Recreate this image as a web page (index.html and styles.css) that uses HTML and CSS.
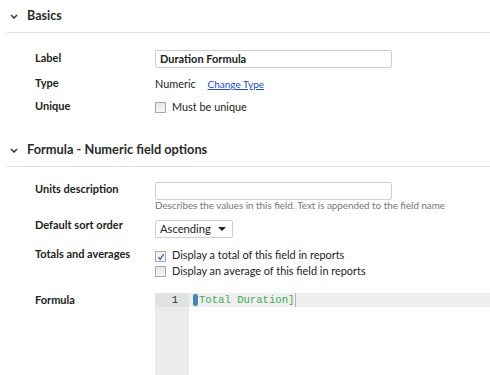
FILE: index.html
```html
<!DOCTYPE html>
<html lang="en">

<head>
    <meta charset="UTF-8">
    <title>Field settings</title>
    <link rel="stylesheet" href="styles.css">
</head>

<body>
    <div class="section">
        <div class="section-head">
            <svg class="chevron" width="8" height="5" viewBox="0 0 8 5"><path d="M1 1 L4 4 L7 1" fill="none" stroke="#333" stroke-width="1.5"/></svg>
            <span>Basics</span>
        </div>
        <div class="fields basics">
            <div class="row row-label">
                <div class="label">Label</div>
                <div class="value"><div class="input bold">Duration Formula</div></div>
            </div>
            <div class="row row-type">
                <div class="label">Type</div>
                <div class="value text">Numeric <a href="#" class="link">Change Type</a></div>
            </div>
            <div class="row row-unique">
                <div class="label">Unique</div>
                <div class="value text"><span class="check"></span>Must be unique</div>
            </div>
        </div>
    </div>

    <div class="section">
        <div class="section-head">
            <svg class="chevron" width="8" height="5" viewBox="0 0 8 5"><path d="M1 1 L4 4 L7 1" fill="none" stroke="#333" stroke-width="1.5"/></svg>
            <span>Formula - Numeric field options</span>
        </div>
        <div class="fields options">
            <div class="row row-units">
                <div class="label">Units description</div>
                <div class="value">
                    <div class="input"></div>
                    <div class="hint">Describes the values in this field. Text is appended to the field name</div>
                </div>
            </div>
            <div class="row row-sort">
                <div class="label">Default sort order</div>
                <div class="value"><div class="select">Ascending <span class="caret"></span></div></div>
            </div>
            <div class="row row-totals">
                <div class="label">Totals and averages</div>
                <div class="value text">
                    <div class="opt"><span class="check checked"><svg width="8" height="8" viewBox="0 0 8 8"><path d="M1.5 4.2 L3.2 6.3 L6.6 1.2" fill="none" stroke="#3b63b8" stroke-width="1.4"/></svg></span>Display a total of this field in reports</div>
                    <div class="opt"><span class="check"></span>Display an average of this field in reports</div>
                </div>
            </div>
            <div class="row row-formula">
                <div class="label">Formula</div>
                <div class="editor">
                    <div class="gutter"><div class="num">1</div></div>
                    <div class="code">
                        <div class="line"><span class="bracket">[</span>Total Duration]<span class="cursor"></span></div>
                    </div>
                </div>
            </div>
        </div>
    </div>
</body>

</html>
```
FILE: styles.css
```css
* {
    padding: 0;
    margin: 0;
    box-sizing: border-box;
}

body {
    width: 490px;
    height: 375px;
    overflow: hidden;
    font-family: Lato, "Open Sans", sans-serif;
    color: #222;
    background: #fff;
}

.section {
    margin-left: 7px;
}

.section-head {
    display: flex;
    align-items: center;
    gap: 9px;
    height: 33px;
    padding-left: 3px;
    border-bottom: 1px solid #dcdcdc;
    font-size: 12.5px;
    font-weight: bold;
    color: #2a2a2a;
}

.section-head span {
    margin-top: -1px;
}

.section + .section .section-head {
    font-size: 12.8px;
    height: 34px;
}

.chevron {
    margin-top: 1px;
}

.fields {
    padding-left: 28px;
}

.basics {
    padding-top: 17px;
    padding-bottom: 18px;
}

.options {
    padding-top: 15px;
}

.row {
    display: grid;
    grid-template-columns: 120px 1fr;
    align-items: start;
}

.label {
    font-size: 11px;
    font-weight: bold;
    line-height: 14px;
    color: #222;
}

.text {
    font-size: 10.9px;
    line-height: 16px;
    color: #222;
}

.input {
    width: 237px;
    height: 18px;
    border: 1px solid #cfcfcf;
    border-radius: 2px;
    padding: 0 4px;
    font-size: 11px;
    line-height: 16px;
}

.bold {
    font-weight: bold;
}

.row-label {
    margin-bottom: 8px;
}

.row-label .label {
    margin-top: 1px;
}

.row-type {
    margin-bottom: 7px;
}

.link {
    color: #1a4fc8;
    font-size: 10px;
    margin-left: 9px;
}

.check {
    display: inline-flex;
    align-items: center;
    justify-content: center;
    width: 11px;
    height: 11px;
    border: 1px solid #a9a9a9;
    background: linear-gradient(#e6e6e6, #f7f7f7);
    vertical-align: -2px;
    margin-right: 6px;
}

.check.checked {
    background: #f4f4f4;
}

.row-units {
    margin-bottom: 6px;
}

.hint {
    font-size: 9.8px;
    color: #777;
    line-height: 12px;
    margin-top: -1px;
}

.row-sort {
    margin-bottom: 9px;
}

.row-sort .label {
    margin-top: 1px;
}

.select {
    display: inline-flex;
    align-items: center;
    justify-content: space-between;
    width: 78px;
    height: 18px;
    border: 1px solid #cfcfcf;
    border-radius: 2px;
    padding: 0 6px 0 4px;
    font-size: 11.2px;
}

.caret {
    width: 0;
    height: 0;
    border-left: 4px solid transparent;
    border-right: 4px solid transparent;
    border-top: 4px solid #222;
}

.row-totals {
    margin-bottom: 14px;
}

.opt {
    height: 16px;
}

.editor {
    display: flex;
    height: 90px;
}

.gutter {
    width: 34px;
    background: #ebebeb;
    flex-shrink: 0;
}

.num {
    height: 14px;
    line-height: 14px;
    text-align: right;
    padding-right: 11px;
    font-family: "Liberation Mono", monospace;
    font-size: 10.6px;
    color: #333;
    background: #e2e2e2;
}

.code {
    flex: 1;
}

.line {
    height: 14px;
    line-height: 14px;
    padding-left: 4px;
    background: #efefef;
    font-family: "Liberation Mono", monospace;
    font-size: 10.6px;
    color: #3aae4f;
    display: flex;
    align-items: center;
}

.bracket {
    background: #4a78d0;
    border-radius: 2px;
    color: #3aae4f;
    display: inline-block;
    width: 5px;
    height: 12px;
    line-height: 12px;
    overflow: hidden;
    margin-right: 1px;
}

.cursor {
    display: inline-block;
    width: 1px;
    height: 14px;
    background: #b5b5b5;
    margin-left: 1px;
}
```
